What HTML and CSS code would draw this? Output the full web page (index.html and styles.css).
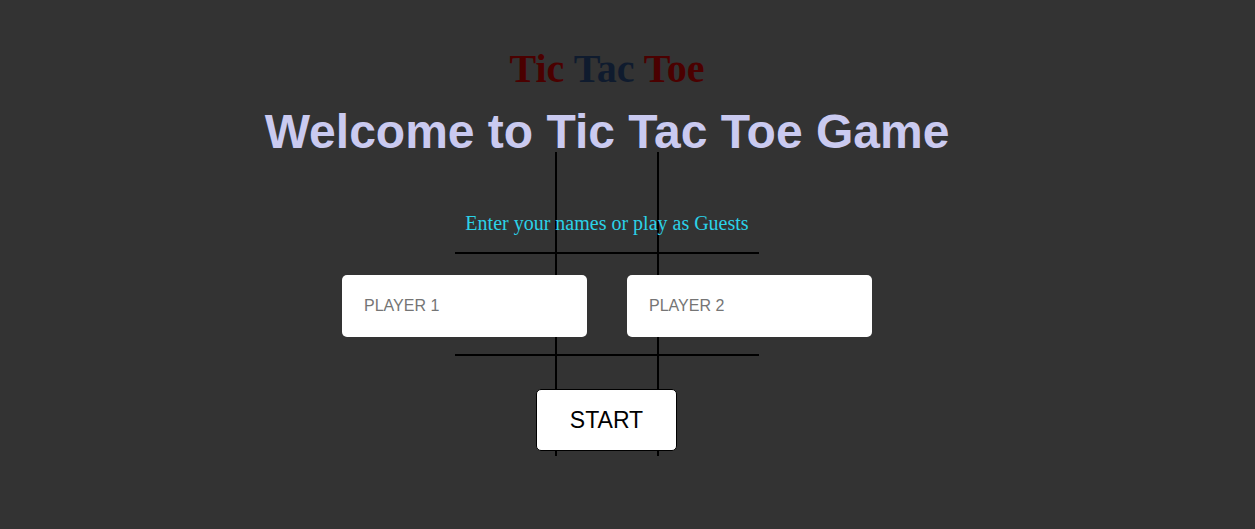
FILE: index.html
```html
<!DOCTYPE html>
<html lang="en">
<head>
<meta charset="utf-8">
<title>Tic Tac Toe</title>
<link rel="stylesheet" href="styles.css">
</head>
<body>
<main class="page">
  <div class="board" aria-hidden="true">
    <span></span><span></span><span></span>
    <span></span><span></span><span></span>
    <span></span><span></span><span></span>
  </div>
  <h2 class="logo"><span class="red">Tic</span> <span class="navy">Tac</span> <span class="red">Toe</span></h2>
  <h1 class="welcome">Welcome to Tic Tac Toe Game</h1>
  <p class="hint">Enter your names or play as Guests</p>
  <div class="players">
    <input class="player" type="text" placeholder="PLAYER 1">
    <input class="player" type="text" placeholder="PLAYER 2">
  </div>
  <button class="start" type="button">START</button>
</main>
</body>
</html>
```

FILE: styles.css
```css
html, body {
  margin: 0;
  padding: 0;
  background: #333333;
  height: 100%;
}

.page {
  position: relative;
  display: flex;
  flex-direction: column;
  align-items: center;
  padding: 47px 41px 0 0;
}

.board {
  position: absolute;
  top: 152px;
  left: calc(50% - 20.5px - 152px);
  width: 304px;
  height: 304px;
  display: grid;
  grid-template-columns: 100px 100px 100px;
  grid-template-rows: 100px 100px 100px;
  gap: 2px;
  background: #000;
  z-index: 0;
}

.board span {
  background: #333333;
}

.logo, .welcome, .hint, .players, .start {
  position: relative;
  z-index: 1;
}

.logo {
  margin: 0;
  font-family: "Liberation Serif", "Times New Roman", serif;
  font-weight: bold;
  font-size: 40px;
  line-height: 44px;
}

.red { color: #4b0000; }
.navy { color: #0f1b2e; }

.welcome {
  margin: 13px 0 0;
  font-family: "Liberation Sans", Arial, sans-serif;
  font-weight: bold;
  font-size: 48px;
  line-height: 56px;
  color: #cacaf0;
}

.hint {
  margin: 51px 0 0;
  font-family: "Liberation Serif", "Times New Roman", serif;
  font-size: 20px;
  line-height: 24px;
  color: #2bd2e8;
}

.players {
  margin-top: 40px;
  display: flex;
  gap: 40px;
}

.player {
  box-sizing: border-box;
  width: 245px;
  height: 62px;
  border: none;
  border-radius: 5px;
  background: #fff;
  padding: 0 22px;
  font-family: "Liberation Sans", Arial, sans-serif;
  font-size: 16px;
  color: #333;
  outline: none;
}

.player::placeholder {
  color: #757575;
}

.start {
  margin-top: 52px;
  margin-right: 1px;
  box-sizing: border-box;
  width: 141px;
  height: 62px;
  background: #fff;
  border: 1px solid #000;
  border-radius: 5px;
  font-family: "Liberation Sans", Arial, sans-serif;
  font-size: 23px;
  color: #000;
  padding: 0;
  cursor: pointer;
}
```
